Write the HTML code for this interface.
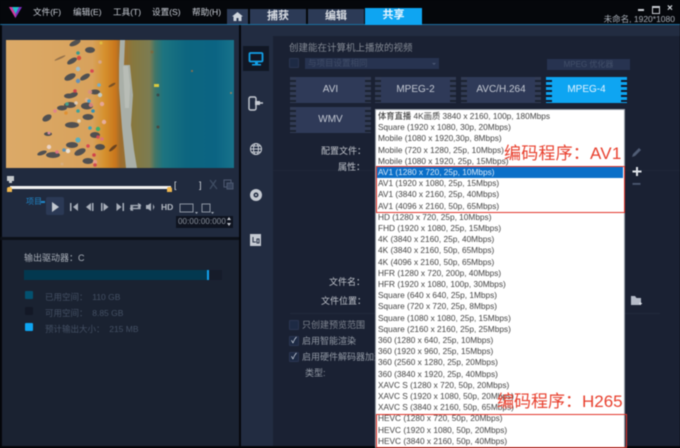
<!DOCTYPE html>
<html lang="zh"><head><meta charset="utf-8"><title>共享</title>
<style>
html,body{margin:0;padding:0;background:#05070b}
#a{position:relative;width:680px;height:448px;overflow:hidden;background:#1a2130;font-family:"Liberation Sans","Noto Sans CJK SC",sans-serif;filter:blur(.45px)}
#a div,#a span.t{position:absolute;white-space:nowrap}
.m{top:7px;font-size:8.6px;line-height:11px;color:#c9ced6}
.tab{top:9px;height:15px;background:#2c3a56;color:#d9dde3;font-size:11px;line-height:15px;text-align:center;font-weight:bold}
.fmt{height:26px;width:66px;background:#2f3a58;color:#c3c8d2;font-size:10px;line-height:26px;text-align:center}
.sp{width:6px;height:26px;background:repeating-linear-gradient(to bottom,#323c55 0 3px,#1b2231 3px 5px)}
.r{left:378px;height:11px;line-height:11px;font-size:8.3px;color:#444}
.g{color:#c1c5cc;font-size:9px;line-height:12px}
.d{color:#445064;font-size:8.5px;line-height:11px}
.cb{width:8px;height:8px;background:#1d2a44;border:1px solid #2a3550;border-radius:1px}
.red{color:#e8402e;font-size:17px;line-height:19px}
.box{border:1.5px solid #e2372c;box-sizing:border-box}
</style></head><body><div id="a">
<div style="left:0;top:0;width:680px;height:24px;background:#05070b"></div>
<div style="left:0;top:24px;width:680px;height:1.5px;background:#1c6e9e"></div>
<svg style="position:absolute;left:9px;top:6px" width="13" height="13" viewBox="0 0 13 13"><path d="M0 1h13L6.500 12z" fill="#7a2fc0"/><path d="M3 1h7L6.500 8z" fill="#1fc0c8"/><path d="M0 1h3l3.500 7 0 4z" fill="#d23a9a"/></svg>
<div class="m" style="left:33px">文件(F)</div>
<div class="m" style="left:73px">编辑(E)</div>
<div class="m" style="left:113px">工具(T)</div>
<div class="m" style="left:152px">设置(S)</div>
<div class="m" style="left:192px">帮助(H)</div>
<div class="tab" style="left:227px;width:21px"></div>
<svg style="position:absolute;left:232px;top:12px" width="11" height="9" viewBox="0 0 11 9"><path d="M5.500 0L0 4.500h1.500V9h3V6h2v3h3V4.500H11z" fill="#cfd5dd"/></svg>
<div class="tab" style="left:250px;width:56px">捕获</div>
<div class="tab" style="left:308px;width:56px">编辑</div>
<div class="tab" style="left:365px;width:57px;background:#0ea5f2;color:#eaf6ff;top:8px;height:16.500px">共享</div>
<div style="left:638px;top:9px;width:6px;height:2px;background:#c8ccd2"></div>
<div style="left:652px;top:6px;width:6px;height:5px;border:1px solid #c8ccd2;border-top-width:2px"></div>
<div style="left:667px;top:3px;color:#d0d4da;font-size:10px;line-height:12px;font-weight:bold">×</div>
<div style="right:5px;top:14px;color:#aab0b9;font-size:8.500px;line-height:11px">未命名, 1920*1080</div>

<!-- left -->
<div style="left:0;top:25px;width:239px;height:423px;background:#202a3e"></div>
<div style="left:0;top:25px;width:2px;height:423px;background:#05070b"></div>
<div style="left:238.500px;top:25px;width:2px;height:423px;background:#05070b"></div>
<svg style="position:absolute;left:6px;top:40px" width="228" height="127.500" viewBox="6 40 228 127.500">
<defs><linearGradient id="s" gradientUnits="userSpaceOnUse" x1="6" x2="234" y1="0" y2="0">
<stop offset="0" stop-color="#dcaa68"/><stop offset=".38" stop-color="#d8a25c"/><stop offset=".43" stop-color="#d6922f"/><stop offset=".48" stop-color="#c9761c"/><stop offset=".5" stop-color="#a06c2c"/><stop offset=".56" stop-color="#86783f"/><stop offset=".63" stop-color="#7c7c52"/><stop offset=".655" stop-color="#3f7568"/><stop offset=".69" stop-color="#1d7480"/><stop offset=".79" stop-color="#0d6680"/><stop offset=".92" stop-color="#0b6483"/><stop offset="1" stop-color="#18738b"/></linearGradient></defs>
<rect x="6" y="40" width="228" height="128" fill="url(#s)"/>
<path d="M120 40h5l-1 25 6 0 3 30-2 30 3 25 3 18h-11l-4-40 -3-40 0-25z" fill="#a9afa8"/>
<path d="M123 66h5l2 20-1 22-4 0z" fill="#c8ccc4" opacity=".5"/>
<g fill="#39424f" opacity=".85">
<ellipse cx="75" cy="43" rx="6" ry="2.500" transform="rotate(-25 75 43)"/><ellipse cx="72" cy="61" rx="5.500" ry="2.500" transform="rotate(-30 72 61)"/><ellipse cx="70" cy="77" rx="6" ry="3" transform="rotate(-25 70 77)"/><ellipse cx="85" cy="77" rx="5.500" ry="2.500" transform="rotate(-30 85 77)"/><ellipse cx="73" cy="95" rx="5" ry="2.500" transform="rotate(-20 73 95)"/><ellipse cx="69" cy="96" rx="5" ry="2.500"/><ellipse cx="62" cy="108" rx="5" ry="2.500"/><ellipse cx="47" cy="118" rx="5" ry="3" transform="rotate(-30 47 118)"/><ellipse cx="70" cy="105" rx="6" ry="3"/><ellipse cx="87" cy="106" rx="6" ry="3.500"/><ellipse cx="72" cy="125" rx="7" ry="3"/><ellipse cx="88" cy="117" rx="5.500" ry="3"/><ellipse cx="48" cy="134" rx="4" ry="2"/><ellipse cx="72" cy="145" rx="6" ry="3"/><ellipse cx="42" cy="153" rx="5" ry="2" transform="rotate(-20 42 153)"/><ellipse cx="53" cy="155" rx="7" ry="3"/><ellipse cx="80" cy="152" rx="6" ry="3" transform="rotate(-25 80 152)"/><ellipse cx="88" cy="161" rx="5.500" ry="3"/><ellipse cx="95" cy="135" rx="5" ry="3"/><ellipse cx="100" cy="147" rx="5" ry="3"/><ellipse cx="90" cy="50" rx="5" ry="3"/><ellipse cx="95" cy="92" rx="5" ry="2.500"/><ellipse cx="60" cy="58" rx="6" ry="1" fill="#8a6a48" transform="rotate(-25 60 58)"/><ellipse cx="112" cy="85" rx="4" ry="1.200" fill="#6a4a28" transform="rotate(-30 112 85)"/><ellipse cx="113" cy="148" rx="5" ry="1.500" fill="#5a3a20" transform="rotate(-40 113 148)"/>
</g>
<g opacity=".9"><circle cx="78" cy="53" r="1.800" fill="#2a9a90"/><circle cx="79" cy="58" r="2.200" fill="#d6433a"/><circle cx="101" cy="43" r="1.500" fill="#e0c040"/><circle cx="100" cy="62" r="1.800" fill="#d8a890"/><circle cx="78" cy="69" r="2.200" fill="#9fc0d0"/><circle cx="92" cy="71" r="1.800" fill="#d84050"/><circle cx="78" cy="81" r="2.200" fill="#5a90c0"/><circle cx="99" cy="85" r="1.800" fill="#6ab0d8"/><circle cx="75" cy="91" r="1.800" fill="#d03848"/><circle cx="90" cy="92" r="2.200" fill="#d89080"/><circle cx="100" cy="95" r="2.200" fill="#c0d0d0"/><circle cx="67" cy="104" r="1.800" fill="#45a890"/><circle cx="76" cy="103" r="1.800" fill="#e0d0c0"/><circle cx="87" cy="100" r="2.200" fill="#e0b090"/><circle cx="89" cy="101" r="1.800" fill="#40a0d0"/><circle cx="91" cy="105" r="2.200" fill="#e08880"/><circle cx="102" cy="104" r="2.200" fill="#e8a8a0"/><circle cx="55" cy="111" r="1.800" fill="#e08090"/><circle cx="78" cy="111" r="1.800" fill="#30a0a0"/><circle cx="93" cy="111" r="1.800" fill="#2090c0"/><circle cx="66" cy="113" r="1.800" fill="#e09030"/><circle cx="79" cy="121" r="1.800" fill="#e0d8c0"/><circle cx="104" cy="122" r="2.200" fill="#e8b0a8"/><circle cx="90" cy="128" r="1.800" fill="#30a0c0"/><circle cx="98" cy="129" r="2.200" fill="#30b070"/><circle cx="49" cy="133" r="1.500" fill="#e090a0"/><circle cx="78" cy="140" r="2.600" fill="#50b0c8"/><circle cx="98" cy="137" r="1.800" fill="#d84858"/><circle cx="102" cy="139" r="1.800" fill="#e07080"/><circle cx="49" cy="147" r="2.200" fill="#ecd8d0"/><circle cx="88" cy="146" r="1.800" fill="#d84050"/><circle cx="57" cy="152" r="1.800" fill="#e07088"/><circle cx="68" cy="151" r="2.200" fill="#eee8e0"/><circle cx="64" cy="150" r="1.800" fill="#5090c0"/><circle cx="94" cy="155" r="1.800" fill="#d03848"/><circle cx="95" cy="162" r="2.200" fill="#e8a090"/><circle cx="95" cy="165" r="1.800" fill="#d04050"/><circle cx="62" cy="164" r="1.500" fill="#d8b080"/></g>
<g><rect x="154" y="84" width="5" height="3" fill="#d8c840"/><circle cx="158" cy="95" r="1.500" fill="#3a4a48"/><circle cx="152" cy="52" r="1.500" fill="#7a6a40"/><circle cx="158" cy="127" r="1.500" fill="#4a4a40"/><circle cx="231" cy="93" r="1" fill="#a08060"/><circle cx="192" cy="71" r="1" fill="#90704a"/></g>
</svg>

<div style="left:7px;top:176px;width:7px;height:5px;background:#c4c8cc"></div>
<div style="left:9px;top:181px;width:3px;height:2px;background:#c4c8cc"></div>
<div style="left:10px;top:186px;width:161px;height:3px;background:#f2f2f2"></div>
<div style="left:7px;top:187px;width:5px;height:5px;background:#f0b850;border-radius:2px 2px 0 0"></div>
<div style="left:167px;top:187px;width:5px;height:5px;background:#f0b850;border-radius:2px 2px 0 0"></div>
<div style="left:174px;top:180px;color:#d8dce2;font-size:9px;line-height:11px">[</div>
<div style="left:199px;top:180px;color:#d8dce2;font-size:9px;line-height:11px">]</div>
<svg style="position:absolute;left:208px;top:179px" width="30" height="12" viewBox="0 0 30 12"><path d="M2 1l7 9M8 1L2 10" stroke="#3f4d63" stroke-width="1.300" fill="none"/><rect x="16" y="1" width="7" height="7" fill="none" stroke="#4c5870" stroke-width="1.100"/><rect x="19" y="4" width="6" height="6" fill="#36425a" stroke="#4c5870"/></svg>
<div style="left:26px;top:196px;color:#1f86c8;font-size:8px;line-height:11px">项目</div>
<div style="left:41px;top:201px;width:4px;height:1.500px;background:#1f86c8"></div>
<div style="left:46px;top:197px;width:18px;height:18px;background:#2b3955;border-radius:2px"></div>
<svg style="position:absolute;left:50px;top:199px" width="176" height="16" viewBox="50 199 176 16" fill="#a9b0bb"><path d="M52 202l7 5-7 5z" fill="#c2c8d0"/><path d="M70 203h1.500v8H70zM78 203v8l-5-4z"/><path d="M91 203v8l-5-4zM92 203h1.500v8H92z"/><path d="M101 203h1.500v8H101zM103.500 203v8l5-4z"/><path d="M116.500 203v8l5-4zM122.500 203h1.500v8h-1.500z"/><path d="M132 210h-1v-4.500h9M138 203.500l2.500 2-2.500 2M140 204v4.500h-9M133 206.500l-2.500 2 2.500 2" fill="none" stroke="#a9b0bb" stroke-width="1.200"/><path d="M146 205h2l3-2v8l-3-2h-2zM153 204l1.500 3-1.500 3z"/><rect x="180" y="204" width="13" height="8" fill="none" stroke="#8c95a2"/><path d="M195 212h3l-1.500 2zM211 212h3l-1.500 2z"/><rect x="202" y="204" width="8" height="8" fill="none" stroke="#8c95a2"/></svg>
<div style="left:161px;top:202px;color:#b4bac3;font-size:8.500px;line-height:11px;font-weight:bold">HD</div>
<div style="left:176px;top:216px;width:57px;height:12px;background:#0f1420;color:#8a919c;font-size:8px;line-height:12px;padding-left:2px;box-sizing:border-box;letter-spacing:.1px">00:00:00:000</div>
<div style="left:226.500px;top:217px;width:0;height:0;border:2.500px solid transparent;border-bottom:3px solid #c5c9d0;border-top:0"></div>
<div style="left:226.500px;top:223px;width:0;height:0;border:2.500px solid transparent;border-top:3px solid #c5c9d0;border-bottom:0"></div>
<div style="left:0;top:237px;width:239px;height:3px;background:#0c1018"></div>
<div style="left:2px;top:240px;width:236.500px;height:206px;background:#1a2231"></div>
<div style="left:24px;top:252px;color:#aab0b9;font-size:9px;line-height:12px">输出驱动器：C</div>
<div style="left:24px;top:270px;width:198px;height:10px;background:#161c2a"></div>
<div style="left:24px;top:270px;width:183px;height:10px;background:#03384f"></div>
<div style="left:206.500px;top:270px;width:2.500px;height:10px;background:#12a3ec"></div>
<div style="left:25px;top:291px;width:8px;height:8px;background:#03516f;border-radius:1px"></div>
<div style="left:25px;top:307px;width:8px;height:8px;background:#131826;border-radius:1px"></div>
<div style="left:25px;top:323px;width:8px;height:8px;background:#0ea5f2;border-radius:1px"></div>
<div class="d" style="left:45px;top:292px">已用空间：&nbsp; 110 GB</div>
<div class="d" style="left:45px;top:308px">可用空间：&nbsp; 8.85 GB</div>
<div class="d" style="left:45px;top:324px">预计输出大小：&nbsp; 215 MB</div>

<!-- right -->
<div style="left:240.500px;top:25px;width:439.500px;height:423px;background:#222c41"></div>
<div style="left:273px;top:36px;width:407px;height:412px;background:#1a2133"></div>
<div style="left:273px;top:170px;width:407px;height:1px;background:#1f2739"></div>
<div style="left:243px;top:46px;width:26px;height:25px;background:#111725"></div>
<svg style="position:absolute;left:248px;top:51px" width="17" height="16" viewBox="0 0 17 16"><rect x="1.500" y="2" width="13" height="8.500" rx="1" fill="none" stroke="#12a0e8" stroke-width="1.800"/><path d="M4 13h9v1.500H4zM7 10h3v3H7z" fill="#12a0e8"/></svg>
<svg style="position:absolute;left:248px;top:96px" width="16" height="15" viewBox="0 0 16 15"><rect x="1" y="1" width="7" height="13" rx="1.500" fill="none" stroke="#c5cad2" stroke-width="1.400"/><path d="M7 5h5v4H7zM12 6.200h3v1.600h-3z" fill="#c5cad2"/></svg>
<svg style="position:absolute;left:249px;top:142px" width="14" height="14" viewBox="0 0 14 14" fill="none" stroke="#bfc4cc" stroke-width="1.100"><circle cx="7" cy="7" r="5.500"/><ellipse cx="7" cy="7" rx="2.500" ry="5.500"/><path d="M1.500 7h11M2.500 4h9M2.500 10h9"/></svg>
<svg style="position:absolute;left:249px;top:188px" width="14" height="14" viewBox="0 0 14 14"><circle cx="7" cy="7" r="6" fill="#c5cad2"/><circle cx="7" cy="7" r="2.500" fill="#222c41"/><circle cx="7" cy="7" r="1" fill="#c5cad2"/></svg>
<svg style="position:absolute;left:250px;top:233px" width="12" height="14" viewBox="0 0 12 14"><rect x="0" y="1" width="11" height="12" fill="#c5cad2"/><path d="M3 4v5h3M7 6h2v4H7z" stroke="#2a3448" fill="none"/></svg>

<div class="g" style="left:289px;top:43px;font-size:9.500px;color:#848a94">创建能在计算机上播放的视频</div>
<div class="cb" style="left:289px;top:58px"></div>
<div style="left:305px;top:58px;width:134px;height:11px;background:#273350;color:#404d68;font-size:8.500px;line-height:11px;padding-left:3px;box-sizing:border-box">与项目设置相同</div>
<div style="left:432px;top:63px;width:0;height:0;border:2px solid transparent;border-top:2.500px solid #4a5672;border-bottom:0"></div>
<div style="left:547px;top:59px;width:83px;height:11px;background:#273350;color:#43506a;font-size:8px;line-height:11px;text-align:center">MPEG 优化器</div>

<div class="sp" style="left:290px;top:77px"></div><div class="fmt" style="left:296px;top:77px;width:69px">AVI</div><div class="sp" style="left:365px;top:77px"></div>
<div class="sp" style="left:375px;top:77px"></div><div class="fmt" style="left:381px;top:77px;width:69px">MPEG-2</div><div class="sp" style="left:450px;top:77px"></div>
<div class="sp" style="left:461px;top:77px"></div><div class="fmt" style="left:467px;top:77px;width:68px">AVC/H.264</div><div class="sp" style="left:535px;top:77px"></div>
<div class="sp" style="left:546px;top:77px;background:repeating-linear-gradient(to bottom,#0ea5f2 0 3px,#10172a 3px 5px)"></div><div class="fmt" style="left:552px;top:77px;width:69px;background:#0ea5f2;color:#e3f3ff">MPEG-4</div><div class="sp" style="left:621px;top:77px;width:6px;background:repeating-linear-gradient(to bottom,#0ea5f2 0 3px,#10172a 3px 5px)"></div>
<div class="sp" style="left:290px;top:107px"></div><div class="fmt" style="left:296px;top:107px;width:69px">WMV</div><div class="sp" style="left:365px;top:107px"></div>

<div class="g" style="left:321px;top:145px">配置文件：</div>
<div class="g" style="left:338px;top:161px">属性：</div>
<div class="g" style="left:329px;top:276px">文件名：</div>
<div class="g" style="left:321px;top:295px">文件位置：</div>
<div style="left:290px;top:313px;width:370px;height:1px;background:#212a3c"></div>
<div class="cb" style="left:289px;top:320px"></div><div class="g" style="left:302px;top:319px;color:#7f8590">只创建预览范围</div>
<div class="cb" style="left:289px;top:336px;color:#e8eef8;font-size:8px;line-height:8px;text-align:center">✓</div><div class="g" style="left:302px;top:335px;color:#939aa5">启用智能渲染</div>
<div class="cb" style="left:289px;top:352px;color:#e8eef8;font-size:8px;line-height:8px;text-align:center">✓</div><div class="g" style="left:302px;top:351px;color:#939aa5">启用硬件解码器加速</div>
<div class="g" style="left:305px;top:367px;color:#939aa5">类型:</div>

<svg style="position:absolute;left:630px;top:146px" width="14" height="45" viewBox="0 0 14 45"><path d="M2 11l1 -3 6-6 2 2-6 6z" fill="#505d75"/><path d="M6 21h2v3.500h3.500v2H8V30H6v-3.500H2.500v-2H6z" fill="#dfe3e9"/><rect x="2.500" y="37" width="8" height="1.800" fill="#4b5770"/></svg>
<svg style="position:absolute;left:630px;top:295px" width="14" height="12" viewBox="0 0 14 12"><path d="M1 1h4l1.500 2H11v7H1z" fill="#b5bbc8"/><path d="M9 8h3v1H9zM10 7h1v3h-1z" fill="#dfe3e9"/></svg>

<!-- dropdown -->
<div style="left:375px;top:109px;width:250px;height:339px;background:#fff;border:.5px solid #9aa0aa;box-sizing:border-box"></div>
<div style="left:377px;top:167px;width:246px;height:11px;background:#0a6fc8"></div>
<div class="r" style="top:111px"><b style="font-weight:500;color:#444">体育直播</b> 4K画质 3840 x 2160, 100p, 180Mbps</div>
<div class="r" style="top:122.200px">Square (1920 x 1080, 30p, 20Mbps)</div>
<div class="r" style="top:133.400px">Mobile (1080 x 1920,30p, 8Mbps)</div>
<div class="r" style="top:144.600px">Mobile (720 x 1280, 25p, 10Mbps)</div>
<div class="r" style="top:155.800px">Mobile (1080 x 1920, 25p, 15Mbps)</div>
<div class="r" style="top:167px;color:#d9e8f8">AV1 (1280 x 720, 25p, 10Mbps)</div>
<div class="r" style="top:178.200px">AV1 (1920 x 1080, 25p, 15Mbps)</div>
<div class="r" style="top:189.400px">AV1 (3840 x 2160, 25p, 40Mbps)</div>
<div class="r" style="top:200.600px">AV1 (4096 x 2160, 50p, 65Mbps)</div>
<div class="r" style="top:211.800px">HD (1280 x 720, 25p, 10Mbps)</div>
<div class="r" style="top:223px">FHD (1920 x 1080, 25p, 15Mbps)</div>
<div class="r" style="top:234.200px">4K (3840 x 2160, 25p, 40Mbps)</div>
<div class="r" style="top:245.400px">4K (3840 x 2160, 50p, 65Mbps)</div>
<div class="r" style="top:256.600px">4K (4096 x 2160, 50p, 65Mbps)</div>
<div class="r" style="top:267.800px">HFR (1280 x 720, 200p, 40Mbps)</div>
<div class="r" style="top:279px">HFR (1920 x 1080, 100p, 30Mbps)</div>
<div class="r" style="top:290.200px">Square (640 x 640, 25p, 1Mbps)</div>
<div class="r" style="top:301.400px">Square (720 x 720, 25p, 8Mbps)</div>
<div class="r" style="top:312.600px">Square (1080 x 1080, 25p, 15Mbps)</div>
<div class="r" style="top:323.800px">Square (2160 x 2160, 25p, 25Mbps)</div>
<div class="r" style="top:335px">360 (1280 x 640, 25p, 10Mbps)</div>
<div class="r" style="top:346.200px">360 (1920 x 960, 25p, 15Mbps)</div>
<div class="r" style="top:357.400px">360 (2560 x 1280, 25p, 20Mbps)</div>
<div class="r" style="top:368.600px">360 (3840 x 1920, 25p, 40Mbps)</div>
<div class="r" style="top:379.800px">XAVC S (1280 x 720, 50p, 20Mbps)</div>
<div class="r" style="top:391px">XAVC S (1920 x 1080, 50p, 20Mbps)</div>
<div class="r" style="top:402.200px">XAVC S (3840 x 2160, 50p, 65Mbps)</div>
<div class="r" style="top:413.400px">HEVC (1280 x 720, 50p, 20Mbps)</div>
<div class="r" style="top:424.600px">HEVC (1920 x 1080, 50p, 20Mbps)</div>
<div class="r" style="top:435.800px">HEVC (3840 x 2160, 50p, 40Mbps)</div>

<div class="box" style="left:376px;top:165.500px;width:249px;height:47px"></div>
<div class="box" style="left:375.500px;top:414px;width:251px;height:34px"></div>
<div class="red" style="left:504px;top:144px;letter-spacing:.2px">编码程序：AV1</div>
<div class="red" style="left:497px;top:392px">编码程序：H265</div>

<div style="left:0;top:446px;width:375px;height:2px;background:#05070b"></div>
<div style="left:627px;top:446px;width:53px;height:2px;background:#05070b"></div>
</div></body></html>
